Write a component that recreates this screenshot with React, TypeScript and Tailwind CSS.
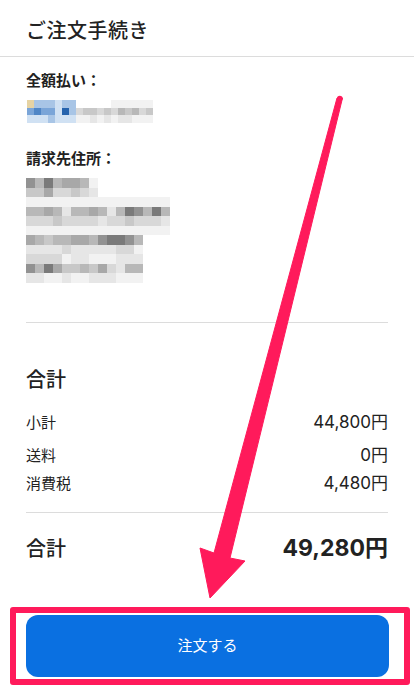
const font = { fontFamily: '"Noto Sans CJK JP", "Noto Sans", sans-serif' };
const numFont = { fontFamily: 'Inter, "Noto Sans CJK JP", sans-serif' };

// mosaic palette: digits are greys, letters are blues / beige
const shade: Record<string, string> = {
  '0': 'bg-[#7a7a7a]',
  '1': 'bg-[#929292]',
  '2': 'bg-[#a8a8a8]',
  '3': 'bg-[#b8b8b8]',
  '4': 'bg-[#c8c8c8]',
  '5': 'bg-[#d8d8d8]',
  '6': 'bg-[#e6e6e6]',
  '7': 'bg-[#f2f2f2]',
  '8': 'bg-transparent',
  a: 'bg-[#2563ad]',
  b: 'bg-[#4f86c6]',
  c: 'bg-[#7aa5d8]',
  d: 'bg-[#a8c5e6]',
  e: 'bg-[#d0e1f3]',
  y: 'bg-[#e6d3a3]',
};

const paymentRows = [
  'ydddedd8888877777788',
  'cbccead54454534354',
  'eeedeee7767676677788',
];

const addressRows = [
  '13032237',
  '44255456',
  '7777777777777777',
  '3323633236301303',
  '5554555565545556',
  '7777777777777777',
  '2343322310013',
  '6666566666557',
  '5555766777666',
  '1302443425633',
  '6677677666777',
];

function Mosaic({ rows, cell }: { rows: string[]; cell: string }) {
  return (
    <div className="flex flex-col blur-[0.6px]">
      {rows.map((r, i) => (
        <div key={i} className="flex">
          {r.split('').map((c, j) => (
            <div key={j} className={`${cell} ${shade[c]}`} />
          ))}
        </div>
      ))}
    </div>
  );
}

function Row({ label, value }: { label: string; value: string }) {
  return (
    <div className="flex justify-between items-center text-[15px] leading-[22px] text-[#222]">
      <span>{label}</span>
      <span className="text-[17px]" style={numFont}>
        {value}
      </span>
    </div>
  );
}

export default function App() {
  return (
    <div className="relative w-[414px] h-[690px] bg-white overflow-hidden" style={font}>
      <header className="h-[57px] px-[26px] pt-[3px] flex items-center border-b border-[#dcdcdc]">
        <h1 className="text-[20px] font-medium text-[#222] tracking-[0.5px]">ご注文手続き</h1>
      </header>

      <div className="px-[26px]">
        <p className="mt-[12px] text-[15px] leading-[22px] font-bold text-[#222]">全額払い：</p>
        <div className="mt-[9px] ml-px">
          <Mosaic rows={paymentRows} cell="w-[7px] h-[7.7px]" />
        </div>

        <p className="mt-[24px] text-[15px] leading-[22px] font-bold text-[#222]">請求先住所：</p>
        <div className="mt-[9px]">
          <Mosaic rows={addressRows} cell="w-[9px] h-[9.5px]" />
        </div>

        <div className="mt-[39px] border-t border-[#dcdcdc]" />

        <h2 className="mt-[42px] text-[20px] leading-[28px] font-medium text-[#222]">合計</h2>
        <div className="mt-[18px]">
          <Row label="小計" value="44,800円" />
        </div>
        <div className="mt-[11px]">
          <Row label="送料" value="0円" />
        </div>
        <div className="mt-[6px]">
          <Row label="消費税" value="4,480円" />
        </div>

        <div className="mt-[18px] border-t border-[#dcdcdc]" />

        <div className="mt-[20px] flex justify-between items-center leading-[30px] text-[#222]">
          <span className="text-[20px] font-medium">合計</span>
          <span className="text-[23px] font-bold" style={numFont}>
            49,280円
          </span>
        </div>
      </div>

      {/* annotation frame round the button */}
      <div className="mt-[44px] ml-[10px] w-[400px] border-[6px] border-[#ff1a5b] rounded-[3px] pl-[10px] pr-[15px] py-[2px]">
        <button className="w-full h-[62px] rounded-[12px] bg-[#0a70e1] text-white text-[15px]">
          注文する
        </button>
      </div>

      {/* annotation arrow */}
      <svg className="absolute inset-0 pointer-events-none" width="414" height="690" viewBox="0 0 414 690">
        <polygon
          points="337,98 342.5,98 230,558 245,561 210,598 200,548 214,553"
          fill="#ff1a5b"
          stroke="#ff1a5b"
          strokeWidth="1"
          strokeLinejoin="round"
        />
        <circle cx="339.8" cy="98.5" r="2.8" fill="#ff1a5b" />
      </svg>
    </div>
  );
}
